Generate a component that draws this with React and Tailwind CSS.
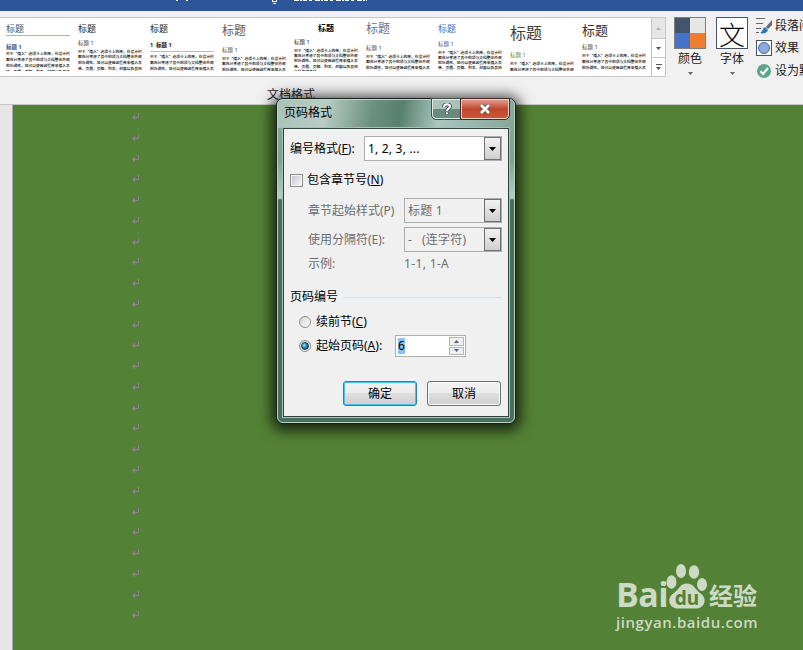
const sample = '对于“插入”选项卡上的库，在设计时都充分考虑了其中的项与文档整体外观的协调性。您可以使用这些库来插入表格、页眉、页脚、列表、封面以及其他文档构建基块。';

const styleSets = [
  { title: 'mt-[6px] text-[9px] text-[#44546a] border-b border-[#9db8de] pb-[2px]', heading: 'mt-[9px] text-[#2f5496] font-bold', body: 'leading-[6px]' },
  { title: 'mt-[6px] text-[9px] text-[#222]', heading: 'mt-[8px] text-[#333]', body: 'mt-[2px] leading-[5.8px]' },
  { title: 'mt-[6px] text-[9px] text-[#222]', heading: 'mt-[10px] text-[#111] font-bold border-b border-[#bbb] pb-[2px]', prefix: '1  ', body: 'mt-[2px] leading-[6px]' },
  { title: 'mt-[7px] text-[12px] text-[#595959]', heading: 'mt-[11px] text-[#444]', body: 'mt-[2px] leading-[5.6px]' },
  { title: 'mt-[6px] text-[8px] text-black font-bold text-center', heading: 'mt-[8px] text-[#111]', body: 'mt-[2px] leading-[5.4px]' },
  { title: 'mt-[5px] text-[12px] text-[#5f7396]', heading: 'mt-[11px] text-[#323e4f]', body: 'mt-[2px] leading-[5.6px]' },
  { title: 'mt-[6px] text-[9px] text-[#4472c4]', heading: 'mt-[9px] text-[#2f5496]', body: 'mt-[2px] leading-[5.1px]' },
  { title: 'mt-[7px] text-[16px] text-[#404040]', heading: 'mt-[12px] text-[#538135]', body: 'mt-[2px] leading-[6px]' },
  { title: 'mt-[6px] text-[13px] text-[#333]', heading: 'mt-[8px] text-[#333]', body: 'mt-[2px] leading-[6px]' },
];

const Caret = ({ className = 'h-[4px] w-[7px]' }) => (
  <svg viewBox="0 0 7 4" className={className} fill="currentColor"><path d="M0 0h7L3.5 4z" /></svg>
);

const StyleCard = ({ item }) => (
  <div className="h-[53px] w-[64px] shrink-0 overflow-hidden">
    <div className={`leading-none ${item.title}`}>标题</div>
    <div className={`text-[5.5px] leading-none whitespace-pre ${item.heading}`}>{item.prefix}标题 1</div>
    <p className={`w-[65px] font-['Noto_Sans_CJK_SC',sans-serif] text-[3.76px] font-medium text-black ${item.body}`}>{sample}</p>
  </div>
);

const BigButton = ({ icon, label }) => (
  <div className="flex w-8 flex-col items-center">
    {icon}
    <span className="mt-[1px] text-[12px] leading-[18px]">{label}</span>
    <Caret className="mt-[4px] h-[3px] w-[5px] text-[#666]" />
  </div>
);

// leftovers of the quick access bar and window title above the ribbon
const TitleBar = () => (
  <div className="h-[11px] shrink-0 bg-[#2b579a]">
    <svg viewBox="0 0 803 11" className="h-[11px] w-[803px]" fill="none" stroke="#fff" shapeRendering="crispEdges">
      <path d="M176 .5h2M186 .5h2M272.5 0v2M276.5 0v2M272 1.5h5M273 3.5h3" />
      <path d="M294 .5h73" strokeDasharray="5 1 2 1 4 2 3 3" />
    </svg>
  </div>
);

const Ribbon = () => (
  <div className="relative h-[94px] border-b border-[#c6c6c6] bg-[#f1f1f1] pt-[6px] text-[#222]">
    <div className="flex">
      <div className="flex h-[60px] w-[651px] shrink-0 gap-[8px] overflow-hidden border-y border-[#c6c6c6] bg-white pl-[6px]">
        {styleSets.map((item, index) => <StyleCard key={index} item={item} />)}
      </div>
      <div className="flex h-[60px] w-[15px] shrink-0 flex-col border border-[#c6c6c6] bg-white text-[#555]">
        <div className="flex h-[21px] items-center justify-center border-b border-[#c6c6c6] bg-[#e6e6e6]"><Caret className="h-[3px] w-[5px] rotate-180 text-[#b5b5b5]" /></div>
        <div className="flex h-[19px] items-center justify-center border-b border-[#c6c6c6]"><Caret className="h-[3px] w-[5px]" /></div>
        <div className="flex flex-1 flex-col items-center justify-center gap-[2px]"><i className="h-px w-[6px] bg-[#555]" /><Caret className="h-[3px] w-[5px]" /></div>
      </div>
      <div className="ml-[8px] flex gap-[10px]">
        <BigButton
          label="颜色"
          icon={
            <div className="grid h-8 w-8 grid-cols-2 border border-[#7f7f7f]">
              <i className="bg-[#44546a]" /><i className="bg-[#e7e6e6]" /><i className="bg-[#4472c4]" /><i className="bg-[#ed7d31]" />
            </div>
          }
        />
        <BigButton label="字体" icon={<div className="flex h-8 w-8 items-center justify-center border border-[#44546a] bg-white pt-[3px] text-[26px] leading-none font-light text-black">文</div>} />
      </div>
      <div className="ml-[8px] flex flex-col text-[12px] leading-[18px] whitespace-nowrap">
        <div className="flex h-[18px] items-center gap-[3px]">
          <svg viewBox="0 0 16 16" className="size-4">
            <path d="M0 .5h9M0 5.5h7M0 10.5h5M0 14.5h3" stroke="#666" fill="none" />
            <path d="M16 2v5l-4 4-2-2z" fill="#666" />
            <path d="M9 9l3 3c-1 3-4 4-8 3 3-1 2-5 5-6z" fill="#2e75b6" />
          </svg>
          段落间距
        </div>
        <div className="mt-[3px] flex h-[20px] items-center gap-[3px]">
          <span className="flex size-4 items-center justify-center border border-[#44546a] bg-white"><i className="size-3 rounded-full border border-[#4668b0] bg-[#8ea9db]" /></span>
          效果
        </div>
        <div className="mt-[2px] flex h-[22px] items-center gap-[3px]">
          <svg viewBox="0 0 16 16" className="size-4"><circle cx="8" cy="8" r="7" fill="#5fa48c" /><path d="M4.5 8.2l2.6 2.8L12 5" stroke="#fff" strokeWidth="2" fill="none" /></svg>
          设为默认值
        </div>
      </div>
    </div>
    <div className="absolute top-[75px] left-[267px] text-[12px] leading-[18px]">文档格式</div>
  </div>
);

const Select = ({ value, width, disabled }) => (
  <div className={`flex h-[25px] border border-[#abadb3] ${width} ${disabled ? 'bg-[#f0f0f0] text-[#6d6d6d]' : 'bg-white'}`}>
    <span className="flex-1 pl-[3px] leading-[23px] tracking-[.2px] whitespace-pre">{value}</span>
    <span className="flex w-[17px] items-center justify-center border border-[#707070] bg-linear-to-b from-[#f2f2f2] to-[#cfcfcf]"><Caret className="h-[4px] w-[7px] text-black" /></span>
  </div>
);

const Radio = ({ checked }) => (
  <span className="flex size-3 items-center justify-center rounded-full border border-[#8e8f8f] bg-linear-to-br from-[#d0d3d5] to-white">
    {checked && <i className="size-[8px] rounded-full border border-[#173a54] bg-radial-[at_35%_35%] from-[#9be8ff] via-[#1c83b5] to-[#0b3651]" />}
  </span>
);

const PageNumberDialog = () => (
  <div className="absolute top-[98px] left-[276px] h-[326px] w-[240px] rounded-[7px] border border-[#16221d] bg-[#4a705f] bg-[linear-gradient(to_bottom,#8fada0_0,#7f9f91_60px,#b9cec4_99px,#47705e_101px,#47705e_100%)] text-[12px] text-black shadow-[0_2px_14px_4px_rgba(0,0,0,.75)]">
    <div className="flex h-full flex-col rounded-[6px] border border-[#bed2c8] px-[5px] pb-[5px]">
      <div className="-mx-[5px] flex h-[28px] rounded-t-[5px] bg-[linear-gradient(100deg,#a9c2b8_0,#b9cdc5_20%,#6c9080_40%,#58806e_52%,#a9c6c0_68%,#86a597_100%)] pr-[5px] pl-[6px]">
        <span className="flex-1 leading-[26px]">页码格式</span>
        <span className="-mt-px flex h-[20px] w-[29px] items-center justify-center rounded-bl-[4px] border border-[#dfe9e5] bg-linear-to-b from-[#abc0b7] from-50% to-[#688b7c] to-50% outline outline-[#3a554a]">
          <svg viewBox="0 0 10 12" className="h-[12px] w-[10px]" fill="none">
            <path d="M2 4c0-3.5 6-3.5 6-.5C8 5.500 5 5.500 5 8M5 9.500v1.500" stroke="#4b5560" strokeWidth="4" />
            <path d="M2 4c0-3.500 6-3.500 6-.5C8 5.500 5 5.500 5 8M5 9.500v1.500" stroke="#fff" strokeWidth="2" />
          </svg>
        </span>
        <span className="-mt-px flex h-[20px] w-[48px] items-center justify-center rounded-br-[4px] border border-[#e8cfc8] bg-linear-to-b from-[#dc9a8a] via-[#c0452b] via-50% to-[#c65a3c] outline outline-[#4a2a22]">
          <svg viewBox="0 0 12 10" className="h-[10px] w-[12px]"><path d="M2 1l8 8M10 1L2 9" stroke="#555a66" strokeWidth="4.4" /><path d="M2 1l8 8M10 1L2 9" stroke="#fff" strokeWidth="2.6" /></svg>
        </span>
      </div>
      <div className="flex-1 border border-[#2c463b] bg-[#f0f0f0] pt-[7px] pr-[6px] pl-[6px] outline outline-[#a8c0b5]">
        <div className="flex items-center justify-between"><span>编号格式(<u>F</u>):</span><Select width="w-[138px]" value="1, 2, 3, ..." /></div>
        <div className="mt-[9px] flex h-[20px] items-center gap-[4px]">
          <span className="flex size-[13px] border border-[#8e8f8f] bg-[#f4f4f4] p-px"><i className="flex-1 bg-linear-to-br from-[#c3c8ce] to-[#f6f6f6]" /></span>
          <span>包含章节号(<u>N</u>)</span>
        </div>
        <div className="mt-[8px] flex items-center justify-between pl-[18px] text-[#6d6d6d]"><span>章节起始样式(P)</span><Select disabled width="w-[98px]" value="标题 1" /></div>
        <div className="mt-[4px] flex items-center justify-between pl-[18px] text-[#6d6d6d]"><span>使用分隔符(E):</span><Select disabled width="w-[98px]" value="-   (连字符)" /></div>
        <div className="mt-[3px] flex h-[18px] items-center pl-[18px] text-[#6d6d6d]"><span className="w-[96px]">示例:</span><span className="tracking-[.35px]">1-1, 1-A</span></div>
        <div className="mt-[15px] flex h-[18px] items-center gap-[5px]"><span>页码编号</span><i className="h-px flex-1 bg-[#d0dfea]" /></div>
        <div className="mt-[6px] flex h-[20px] items-center gap-[5px] pl-[9px]"><Radio /><span>续前节(<u>C</u>)</span></div>
        <div className="mt-[3px] flex h-[22px] items-center pl-[9px]">
          <Radio checked />
          <span className="ml-[5px] w-[79px]">起始页码(<u>A</u>):</span>
          <div className="flex h-[22px] w-[71px] justify-between border border-[#abadb3] bg-white p-px">
            <span className="ml-px h-[16px] self-center bg-[#86c1fb] leading-[15px]">6</span>
            <div className="flex w-[15px] flex-col gap-px text-[#4a5b9c]">
              <i className="flex flex-1 items-center justify-center border border-[#b5b5b5] bg-[#efefef]"><Caret className="h-[3px] w-[5px] rotate-180" /></i>
              <i className="flex flex-1 items-center justify-center border border-[#b5b5b5] bg-[#efefef]"><Caret className="h-[3px] w-[5px]" /></i>
            </div>
          </div>
        </div>
        <div className="mt-[24px] mr-px flex justify-end gap-[10px]">
          <button className="h-[25px] w-[74px] rounded-[3px] border border-[#2c7fb0] bg-[linear-gradient(#f2f2f2,#ebebeb_50%,#dddddd_50%,#cfcfcf)] inset-ring inset-ring-[#46c3ee]">确定</button>
          <button className="h-[25px] w-[74px] rounded-[3px] border border-[#707070] bg-[linear-gradient(#f2f2f2,#ebebeb_50%,#dddddd_50%,#cfcfcf)] inset-ring inset-ring-[#fafafa]">取消</button>
        </div>
      </div>
    </div>
  </div>
);

const Watermark = () => (
  <div className="absolute top-[563px] left-[616px] w-[150px] text-[#cddac5]">
    <div className="flex h-[49px] items-end">
      <span className="w-[50px] pb-px font-['Open_Sans',sans-serif] text-[34px] leading-[33px] font-bold tracking-[-.6px]">Bai</span>
      <svg viewBox="0 0 42 47" className="mb-[3px] h-[47px] w-[42px] shrink-0" fill="currentColor">
        <ellipse cx="5.500" cy="20" rx="5" ry="6.800" /><ellipse cx="15" cy="9" rx="5" ry="7" /><ellipse cx="28" cy="10" rx="5.200" ry="6.800" /><ellipse cx="36" cy="22.500" rx="5" ry="6.500" />
        <path d="M21 21.500c-7 0-8 6-13 9.500-8 5-5 15.500 4 15.500h18c9 0 12-10.500 4-15.500-5-3.500-6-9.500-13-9.500z" />
        <text x="21" y="42.500" textAnchor="middle" fontSize="19" fontWeight="700" fill="#538135">du</text>
      </svg>
      <span className="ml-[1px] text-[24px] leading-[32px] font-bold">经验</span>
    </div>
    <div className="mt-px font-['Open_Sans',sans-serif] text-[15px] leading-[18px] font-semibold tracking-[.55px] whitespace-nowrap">jingyan.baidu.com</div>
  </div>
);

const App = () => (
  <div className="relative flex h-[650px] w-[803px] flex-col overflow-hidden bg-[#f1f1f1] font-['Noto_Sans','Noto_Sans_CJK_SC',sans-serif]">
    <TitleBar />
    <Ribbon />
    <div className="flex flex-1">
      <div className="w-[13px] border-r border-[#ababab] bg-[#e6e6e6]" />
      <div className="flex-1 bg-[#538135] pt-[7px] pl-[119px]">
        {Array.from({ length: 25 }, (_, index) => (
          <div key={index} className="h-[20.78px]">
            <svg viewBox="0 0 8 9" className="h-[9px] w-[8px]" fill="none" stroke="#8d828c"><path d="M6.5 1v4.500H0M2.500 3v5M1.500 4v3" /></svg>
          </div>
        ))}
      </div>
    </div>
    <Watermark />
    <PageNumberDialog />
  </div>
);

export default App;
